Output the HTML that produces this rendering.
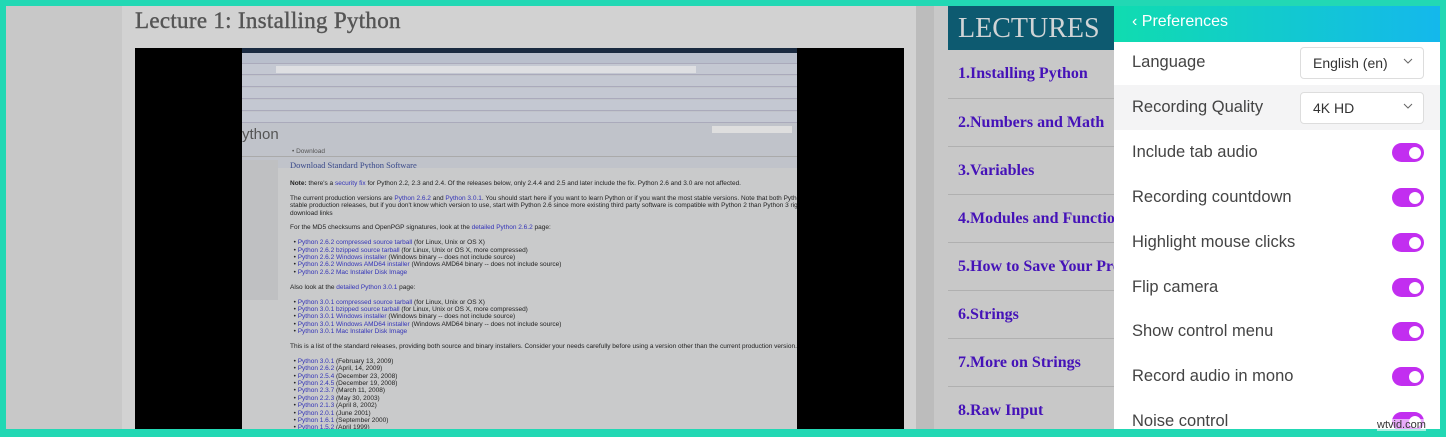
<!DOCTYPE html>
<html><head><style>
*{margin:0;padding:0;box-sizing:border-box}
body{width:1446px;height:437px;overflow:hidden;background:#22d8b4;position:relative;font-family:"Liberation Sans",sans-serif}
.abs{position:absolute}
.shot{font-size:6.5px;color:#222;line-height:7px;white-space:nowrap;overflow:hidden}
.shot a{color:#3434b8}
.lec{position:absolute;left:948px;width:166px;height:48px;border-top:1px solid #b0b0b0;font-family:"Liberation Serif",serif;font-size:16px;color:#4512b8;padding-left:10px;line-height:48px;white-space:nowrap;overflow:hidden;font-weight:bold}
.row{position:absolute;left:1114px;width:326px;height:45px;font-size:16.5px;color:#444;padding-left:18px;line-height:45px}
.tg{position:absolute;right:16px;top:13px;width:32px;height:19px;border-radius:10px;background:#c22ef0}
.tg::after{content:"";position:absolute;right:3px;top:3.5px;width:12px;height:12px;border-radius:50%;background:#fff}
.dd{position:absolute;left:186px;width:124px;height:32px;border:1px solid #ddd;border-radius:4px;background:#fff;font-size:14px;line-height:30px;padding-left:12px;color:#333}
.dd svg{position:absolute;right:10px;top:10px}
.tb{position:absolute;left:0;width:555px;height:11px;border-bottom:1px solid #aab}
</style></head><body>
<div class="abs" style="left:6px;top:6px;width:1434px;height:423px;background:#c8c8c8"></div>
<div class="abs" style="left:122px;top:6px;width:794px;height:423px;background:#d2d2d2"></div>
<div class="abs" style="left:135px;top:8px;font-family:'Liberation Serif',serif;font-size:23px;color:#555;letter-spacing:0.3px;-webkit-text-stroke:0.4px #555">Lecture 1: Installing Python</div>
<div class="abs" style="left:135px;top:48px;width:769px;height:381px;background:#000"></div>
<div class="abs" style="left:242px;top:48px;width:555px;height:381px;background:#c9cacb;overflow:hidden">
 <div class="abs" style="left:0;top:0;width:555px;height:5px;background:#1a2a40"></div>
 <div class="abs" style="left:0;top:5px;width:555px;height:115px;background:#c0c3ca"></div>
 <div class="tb" style="top:5px;background:#b9bfcc"></div>
 <div class="tb" style="top:16px;background:#c4c8d2"></div>
 <div class="abs" style="left:34px;top:18px;width:420px;height:7px;background:#dedfe2"></div>
 <div class="tb" style="top:28px;background:#c4c8d2"></div>
 <div class="tb" style="top:40px;background:#c4c8d2"></div>
 <div class="tb" style="top:52px;background:#c4c8d2"></div>
 <div class="tb" style="top:64px;background:#c4c8d2"></div>
 <div class="abs shot" style="left:0;top:78px;font-size:15px;line-height:18px;color:#555">ython</div>
 <div class="abs" style="left:470px;top:78px;width:80px;height:7px;background:#dedede"></div>
 <div class="abs shot" style="left:50px;top:100px;color:#555">• Download</div>
 <div class="abs" style="left:0;top:108px;width:555px;height:1px;background:#aaa"></div>
 <div class="abs" style="left:0;top:112px;width:36px;height:140px;background:#bfc0c2"></div>
 <div class="abs shot" style="left:48px;top:114px;font-size:8.5px;color:#3a4a8a;font-family:'Liberation Serif',serif">Download Standard Python Software</div>
 <div class="abs shot" style="left:48px;top:132px;line-height:7.4px">
 <b>Note:</b> there's a <a>security fix</a> for Python 2.2, 2.3 and 2.4. Of the releases below, only 2.4.4 and 2.5 and later include the fix. Python 2.6 and 3.0 are not affected.<br><br>
 The current production versions are <a>Python 2.6.2</a> and <a>Python 3.0.1</a>. You should start here if you want to learn Python or if you want the most stable versions. Note that both Python 2.6 and 3.0 are considered<br>stable production releases, but if you don't know which version to use, start with Python 2.6 since more existing third party software is compatible with Python 2 than Python 3 right now. Here are some<br>download links<br><br>
 For the MD5 checksums and OpenPGP signatures, look at the <a>detailed Python 2.6.2</a> page:<br><br>
 &nbsp;&nbsp;• <a>Python 2.6.2 compressed source tarball</a> (for Linux, Unix or OS X)<br>
 &nbsp;&nbsp;• <a>Python 2.6.2 bzipped source tarball</a> (for Linux, Unix or OS X, more compressed)<br>
 &nbsp;&nbsp;• <a>Python 2.6.2 Windows installer</a> (Windows binary -- does not include source)<br>
 &nbsp;&nbsp;• <a>Python 2.6.2 Windows AMD64 installer</a> (Windows AMD64 binary -- does not include source)<br>
 &nbsp;&nbsp;• <a>Python 2.6.2 Mac Installer Disk Image</a><br><br>
 Also look at the <a>detailed Python 3.0.1</a> page:<br><br>
 &nbsp;&nbsp;• <a>Python 3.0.1 compressed source tarball</a> (for Linux, Unix or OS X)<br>
 &nbsp;&nbsp;• <a>Python 3.0.1 bzipped source tarball</a> (for Linux, Unix or OS X, more compressed)<br>
 &nbsp;&nbsp;• <a>Python 3.0.1 Windows installer</a> (Windows binary -- does not include source)<br>
 &nbsp;&nbsp;• <a>Python 3.0.1 Windows AMD64 installer</a> (Windows AMD64 binary -- does not include source)<br>
 &nbsp;&nbsp;• <a>Python 3.0.1 Mac Installer Disk Image</a><br><br>
 This is a list of the standard releases, providing both source and binary installers. Consider your needs carefully before using a version other than the current production version.<br><br>
 &nbsp;&nbsp;• <a>Python 3.0.1</a> (February 13, 2009)<br>&nbsp;&nbsp;• <a>Python 2.6.2</a> (April, 14, 2009)<br>&nbsp;&nbsp;• <a>Python 2.5.4</a> (December 23, 2008)<br>&nbsp;&nbsp;• <a>Python 2.4.5</a> (December 19, 2008)<br>&nbsp;&nbsp;• <a>Python 2.3.7</a> (March 11, 2008)<br>&nbsp;&nbsp;• <a>Python 2.2.3</a> (May 30, 2003)<br>&nbsp;&nbsp;• <a>Python 2.1.3</a> (April 8, 2002)<br>&nbsp;&nbsp;• <a>Python 2.0.1</a> (June 2001)<br>&nbsp;&nbsp;• <a>Python 1.6.1</a> (September 2000)<br>&nbsp;&nbsp;• <a>Python 1.5.2</a> (April 1999)<br>&nbsp;&nbsp;• Older releases: <a>Source releases, binaries-1.1, binaries-1.2, binaries-1.3, binaries-1.4, binaries-1.5</a><br>&nbsp;&nbsp;• <a>ActiveState ActivePython</a> (not open source)<br>&nbsp;&nbsp;• <a>Enthought Python Distribution</a> (a commercial distribution for scientific computing)
 </div>
</div>
<div class="abs" style="left:916px;top:6px;width:18px;height:423px;background:#bcbcbc"></div>
<div class="abs" style="left:948px;top:6px;width:166px;height:44px;background:#0d5a70;color:#d0d4d6;font-family:'Liberation Serif',serif;font-size:28px;line-height:46px;padding-left:10px">LECTURES</div>
<div class="lec" style="top:50px;border-top:none">1.Installing Python</div>
<div class="lec" style="top:98px">2.Numbers and Math</div>
<div class="lec" style="top:146px">3.Variables</div>
<div class="lec" style="top:194px">4.Modules and Functions</div>
<div class="lec" style="top:242px">5.How to Save Your Programs</div>
<div class="lec" style="top:290px">6.Strings</div>
<div class="lec" style="top:338px">7.More on Strings</div>
<div class="lec" style="top:386px">8.Raw Input</div>
<div class="abs" style="left:1114px;top:6px;width:326px;height:423px;background:#fff;overflow:hidden">
 <div class="abs" style="left:0;top:0;width:326px;height:36px;background:linear-gradient(90deg,#10dcb0,#14b8ec);color:#fff;font-size:16px;line-height:32px;padding-left:18px">‹ Preferences</div>
</div>
<div class="row" style="top:40px">Language<div class="dd" style="top:7px">English (en)<svg width="10" height="6"><path d="M1 1l4 4 4-4" stroke="#666" fill="none"/></svg></div></div>
<div class="row" style="top:85px;background:#f4f4f5">Recording Quality<div class="dd" style="top:7px">4K HD<svg width="10" height="6"><path d="M1 1l4 4 4-4" stroke="#666" fill="none"/></svg></div></div>
<div class="row" style="top:130px">Include tab audio<div class="tg"></div></div>
<div class="row" style="top:175px">Recording countdown<div class="tg"></div></div>
<div class="row" style="top:220px">Highlight mouse clicks<div class="tg"></div></div>
<div class="row" style="top:265px">Flip camera<div class="tg"></div></div>
<div class="row" style="top:309px">Show control menu<div class="tg"></div></div>
<div class="row" style="top:354px">Record audio in mono<div class="tg"></div></div>
<div class="row" style="top:399px;height:30px;overflow:hidden">Noise control<div class="tg"></div></div>
<div class="abs" style="left:1377px;top:419px;font-size:11px;color:#333;background:rgba(255,255,255,.6)">wtvid.com</div>
</body></html>
